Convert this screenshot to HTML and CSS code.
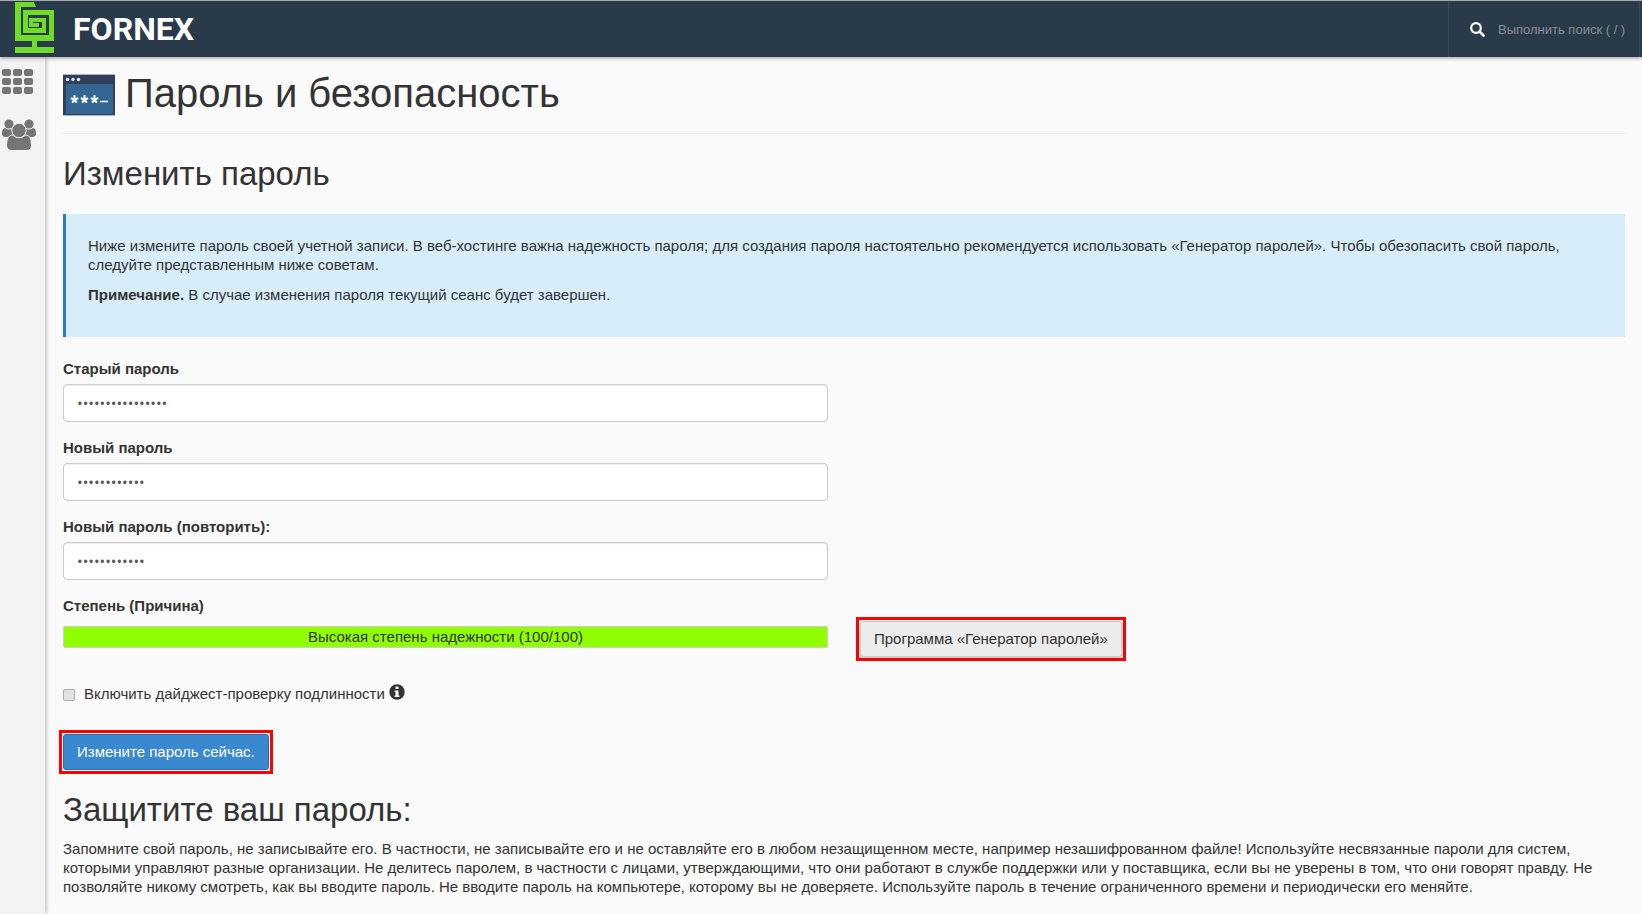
FILE: index.html
```html
<!DOCTYPE html>
<html lang="ru">
<head>
  <meta charset="UTF-8">
  <title>Пароль и безопасность</title>
  <link rel="stylesheet" href="styles.css">
</head>
<body>
  <header class="navbar">
    <a class="brand" href="#">
      <svg class="brand-logo" width="42" height="54" viewBox="0 0 42 54" aria-hidden="true">
        <path fill="#6fdc2a" d="M1 0H20L22 5H7V33H35V13H14V26H28V20H19V21H25V25H15V16H32V31H9V8H40V39H23V45H40V51H1V45H18V39H1Z"/>
      </svg>
      <span class="brand-name">FORNEX</span>
    </a>
    <div class="search">
      <svg width="15" height="15" viewBox="0 0 15 15" aria-hidden="true">
        <circle cx="6" cy="6" r="4.8" fill="none" stroke="#fff" stroke-width="2.2"/>
        <path d="M9.5 9.5L13.5 13.5" stroke="#fff" stroke-width="2.6" stroke-linecap="round"/>
      </svg>
      <input type="text" placeholder="Выполнить поиск ( / )" aria-label="Выполнить поиск">
    </div>
  </header>

  <div class="layout">
    <nav class="sidebar">
      <a href="#" aria-label="Главная">
        <svg width="32" height="26" viewBox="0 0 32 26" fill="#757575">
          <rect x="0" y="0" width="9" height="7" rx="2"/>
          <rect x="11" y="0" width="9" height="7" rx="2"/>
          <rect x="22" y="0" width="9" height="7" rx="2"/>
          <rect x="0" y="9" width="9" height="7" rx="2"/>
          <rect x="11" y="9" width="9" height="7" rx="2"/>
          <rect x="22" y="9" width="9" height="7" rx="2"/>
          <rect x="0" y="18" width="9" height="7" rx="2"/>
          <rect x="11" y="18" width="9" height="7" rx="2"/>
          <rect x="22" y="18" width="9" height="7" rx="2"/>
        </svg>
      </a>
      <a href="#" aria-label="Пользователи">
        <svg width="34" height="32" viewBox="0 0 34 32" fill="#757575">
          <circle cx="7" cy="5" r="4.6"/>
          <circle cx="27" cy="5" r="4.6"/>
          <path d="M3 9Q7 12 11 9L14 18H4Q0 18 0 15Q0 9 3 9Z"/>
          <path d="M31 9Q27 12 23 9L20 18H30Q34 18 34 15Q34 9 31 9Z"/>
          <g stroke="#f3f3f3" stroke-width="1">
            <path d="M10 16Q17 21 24 16Q29 16 29.500 26Q29.500 31.500 24 31.500H10Q4.500 31.500 4.500 26Q5 16 10 16Z"/>
            <circle cx="17" cy="11.500" r="7.200"/>
          </g>
        </svg>
      </a>
    </nav>

    <main class="content">
      <h1 class="page-header">
        <svg width="52" height="42" viewBox="0 0 52 42" aria-hidden="true">
          <rect width="52" height="42" fill="#30405b"/>
          <rect x="3" y="10" width="47" height="30" rx="1" fill="#336791"/>
          <path d="M0 .5H52M0 41.500H52" stroke="#a9b3c1"/>
          <g fill="#e4e7eb">
            <circle cx="4.500" cy="5.500" r="1.700"/>
            <circle cx="10" cy="5.500" r="1.700"/>
            <circle cx="15.500" cy="5.500" r="1.700"/>
          </g>
          <path d="M11.500 21V25.500M11.500 25.500L7.800 24.300M11.500 25.500L15.200 24.300M11.500 25.500L9.200 28.700M11.500 25.500L13.800 28.700M21.500 21V25.500M21.500 25.500L17.800 24.300M21.500 25.500L25.200 24.300M21.500 25.500L19.200 28.700M21.500 25.500L23.800 28.700M31.500 21V25.500M31.500 25.500L27.800 24.300M31.500 25.500L35.200 24.300M31.500 25.500L29.200 28.700M31.500 25.500L33.800 28.700" stroke="#fff" stroke-width="2"/>
          <path d="M37 27.500H45" stroke="#fff" stroke-width="1.500"/>
        </svg>
        <span>Пароль и безопасность</span>
      </h1>

      <h2>Изменить пароль</h2>

      <div class="callout">
        <p>Ниже измените пароль своей учетной записи. В веб-хостинге важна надежность пароля; для создания пароля настоятельно рекомендуется использовать «Генератор паролей». Чтобы обезопасить свой пароль, следуйте представленным ниже советам.</p>
        <p><strong>Примечание.</strong> В случае изменения пароля текущий сеанс будет завершен.</p>
      </div>

      <form>
        <div class="row">
          <div class="form-group">
            <label for="oldpass">Старый пароль</label>
            <input type="password" id="oldpass" class="form-control" value="aaaaaaaaaaaaaaaa">
          </div>
        </div>
        <div class="row">
          <div class="form-group">
            <label for="newpass">Новый пароль</label>
            <input type="password" id="newpass" class="form-control" value="aaaaaaaaaaaa">
          </div>
        </div>
        <div class="row">
          <div class="form-group">
            <label for="newpass2">Новый пароль (повторить):</label>
            <input type="password" id="newpass2" class="form-control" value="aaaaaaaaaaaa">
          </div>
        </div>
        <div class="row strength-row">
          <div>
            <label for="strength">Степень (Причина)</label>
            <output id="strength" class="strength">Высокая степень надежности (100/100)</output>
          </div>
          <div>
            <span class="highlight">
              <button type="button" class="btn btn-default">Программа «Генератор паролей»</button>
            </span>
          </div>
        </div>

        <div class="checkbox">
          <input type="checkbox" id="digest">
          <label for="digest">Включить дайджест-проверку подлинности</label>
          <svg width="16" height="16" viewBox="0 0 16 16" aria-hidden="true">
            <circle cx="8" cy="8" r="7.700" fill="#333"/>
            <path fill="#fafafa" d="M6.500 2.500H9.500V5H6.500ZM5.500 6.500H9.500V11.500H10.500V13H5.500V11.500H6.500V8H5.500Z"/>
          </svg>
        </div>

        <span class="highlight submit">
          <button type="button" class="btn btn-primary">Измените пароль сейчас.</button>
        </span>
      </form>

      <h2>Защитите ваш пароль:</h2>
      <p>Запомните свой пароль, не записывайте его. В частности, не записывайте его и не оставляйте его в любом незащищенном месте, например незашифрованном файле! Используйте несвязанные пароли для систем, которыми управляют разные организации. Не делитесь паролем, в частности с лицами, утверждающими, что они работают в службе поддержки или у поставщика, если вы не уверены в том, что они говорят правду. Не позволяйте никому смотреть, как вы вводите пароль. Не вводите пароль на компьютере, которому вы не доверяете. Используйте пароль в течение ограниченного времени и периодически его меняйте.</p>
    </main>
  </div>
</body>
</html>
```
FILE: styles.css
```css
* {
  box-sizing: border-box;
}

body {
  margin: 0;
  min-height: 100vh;
  display: flex;
  flex-direction: column;
  background: #fafafa;
  color: #333;
  font-family: "Liberation Sans", Arial, sans-serif;
  font-size: 15px;
  line-height: 19px;
}

.navbar {
  position: relative;
  display: flex;
  justify-content: space-between;
  height: 57px;
  padding-right: 2px;
  border-top: 1px solid #aaa;
  background: #293a4a;
  box-shadow: 0 1px 4px rgba(0, 0, 0, 0.4);
}

.brand {
  display: flex;
  align-items: center;
  gap: 17px;
  padding-left: 14px;
  text-decoration: none;
}

.brand-name {
  color: #fff;
  font-family: Roboto, sans-serif;
  font-size: 32px;
  font-weight: bold;
}

.search {
  display: flex;
  align-items: center;
  gap: 13px;
  width: 192px;
  padding-left: 21px;
  border-left: 1px solid #34495e;
  border-right: 1px solid #34495e;
}

.search svg {
  flex: none;
}

.search input {
  flex: 1;
  min-width: 0;
  padding: 0;
  border: 0;
  background: none;
  color: #fff;
  font-family: inherit;
  font-size: 13px;
}

.search input::placeholder {
  color: #8a8f93;
}

.layout {
  display: flex;
  flex: 1;
}

.sidebar {
  flex: none;
  width: 45px;
  padding: 12px 0 0 2px;
  background: #f3f3f3;
  box-shadow: 0 0 5px rgba(0, 0, 0, 0.4);
}

.sidebar a {
  display: block;
  margin-bottom: 24px;
}

.sidebar svg {
  display: block;
}

.content {
  flex: 1;
  padding: 11px 17px 0 18px;
}

h1, h2 {
  font-weight: normal;
}

.page-header {
  display: flex;
  align-items: center;
  gap: 10px;
  margin: 0 0 21px;
  padding-bottom: 15px;
  border-bottom: 1px solid #eee;
  font-size: 40px;
  line-height: 50px;
}

.page-header svg {
  margin-top: 4px;
}

h2 {
  margin: 0 0 21px;
  font-size: 33px;
  line-height: 38px;
}

p {
  margin: 0 0 11px;
}

.callout {
  margin-bottom: 22px;
  padding: 22px 22px 11px;
  border-left: 3px solid #2980b9;
  background: #d7edf9;
}

.callout p:last-child {
  margin-bottom: 22px;
}

.row {
  display: grid;
  grid-template-columns: 1fr 1fr;
  gap: 32px;
}

.form-group {
  margin-bottom: 16px;
}

.row label {
  display: block;
  margin-bottom: 6px;
  font-weight: bold;
}

.form-control {
  display: block;
  width: 100%;
  height: 38px;
  padding: 8px 13px;
  border: 1px solid #ccc;
  border-radius: 4px;
  background: #fff;
  box-shadow: inset 0 1px 1px rgba(0, 0, 0, 0.08);
  color: #555;
  font-family: "Open Sans", "Liberation Sans", sans-serif;
  font-size: 15px;
}

.strength-row {
  align-items: end;
}

.strength {
  display: block;
  height: 22px;
  margin: 11px 0 13px;
  border: 1px solid #ccc;
  border-radius: 2px;
  background: #90ff00;
  line-height: 20px;
  text-align: center;
}

/* red frame around the buttons */
.highlight {
  display: inline-block;
  margin-left: -4px;
  padding: 1px;
  border: 3px solid #f00;
}

.btn {
  display: block;
  height: 36px;
  padding: 0 13px 1px;
  border: 1px solid #ccc;
  border-radius: 3px;
  font-family: inherit;
  font-size: 15px;
  cursor: pointer;
}

.btn-default {
  background: #ececec;
  box-shadow: 0 1px 3px rgba(0, 0, 0, 0.3);
  color: #333;
}

.btn-primary {
  border-color: #2a6ca8;
  background: #3a89d0;
  color: #fff;
}

.checkbox {
  display: flex;
  align-items: center;
  gap: 4px;
  margin-top: 23px;
}

.checkbox input {
  appearance: none;
  width: 12px;
  height: 12px;
  margin: 2px 5px 0 0;
  border: 1px solid #aaa;
  border-radius: 2px;
  background: #e2e2e2;
}

.checkbox svg {
  margin-bottom: 3px;
}

.submit {
  margin-top: 27px;
  margin-bottom: 17px;
}

form + h2 {
  margin-bottom: 10px;
}
```
